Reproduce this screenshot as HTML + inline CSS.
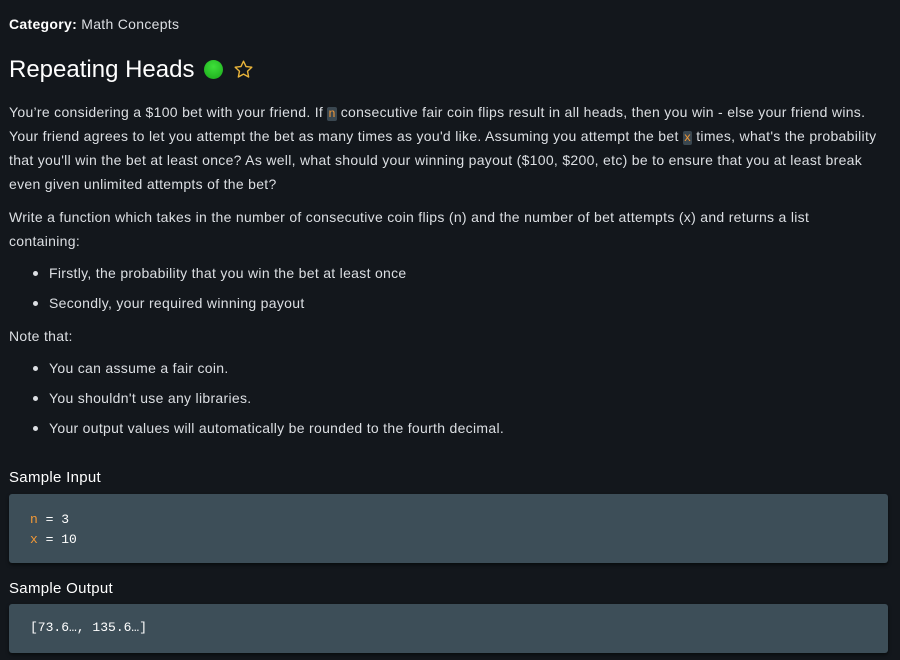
<!DOCTYPE html>
<html><head><style>
body{margin:0;width:900px;height:660px;background:#13171c;color:#dcdfe3;font-family:"Liberation Sans",sans-serif;font-size:14px;letter-spacing:.3px;overflow:hidden;position:relative}
.a{position:absolute;left:9px;white-space:nowrap}
.c{background:#3a4750;color:#f59a36;padding:0 1px;border-radius:2px;font-family:"Liberation Mono",monospace;font-size:12px;letter-spacing:0}
.li{position:absolute;left:49px;white-space:nowrap}
.dot{position:absolute;left:33px;width:5px;height:5px;border-radius:50%;background:#dcdfe3}
.box{position:absolute;left:9px;width:879px;background:#3d4e58;border-radius:3px;box-shadow:0 2px 3px rgba(0,0,0,.5);font-family:"Liberation Mono",monospace;font-size:13px;letter-spacing:0;color:#fff}
.h{position:absolute;left:9px;font-size:15px;color:#fff}
</style></head><body>
<div class="a" style="top:16px"><b style="color:#fff">Category:</b> Math Concepts</div>
<div class="a" style="top:56px;font-size:24px;color:#fff;letter-spacing:0">Repeating Heads</div>
<div style="position:absolute;left:204px;top:60px;width:19px;height:19px;border-radius:50%;background:radial-gradient(circle at 50% 35%,#3ee03a,#1aa81a)"></div>
<svg style="position:absolute;left:233px;top:59px" width="21" height="21" viewBox="0 0 24 24"><path d="M12 2.5l2.9 6.1 6.6.8-4.9 4.6 1.3 6.6L12 17.3l-5.9 3.3 1.3-6.6-4.9-4.6 6.6-.8z" fill="none" stroke="#e9b43a" stroke-width="1.6" stroke-linejoin="round"/></svg>
<div class="a" style="top:104px">You’re considering a $100 bet with your friend. If <span class="c">n</span> consecutive fair coin flips result in all heads, then you win - else your friend wins.</div>
<div class="a" style="top:128px">Your friend agrees to let you attempt the bet as many times as you'd like. Assuming you attempt the bet <span class="c">x</span> times, what's the probability</div>
<div class="a" style="top:152px">that you'll win the bet at least once? As well, what should your winning payout ($100, $200, etc) be to ensure that you at least break</div>
<div class="a" style="top:176px">even given unlimited attempts of the bet?</div>
<div class="a" style="top:209px">Write a function which takes in the number of consecutive coin flips (n) and the number of bet attempts (x) and returns a list</div>
<div class="a" style="top:233px">containing:</div>
<div class="dot" style="top:271px"></div><div class="li" style="top:265px">Firstly, the probability that you win the bet at least once</div>
<div class="dot" style="top:301px"></div><div class="li" style="top:295px">Secondly, your required winning payout</div>
<div class="a" style="top:328px">Note that:</div>
<div class="dot" style="top:366px"></div><div class="li" style="top:360px">You can assume a fair coin.</div>
<div class="dot" style="top:396px"></div><div class="li" style="top:390px">You shouldn't use any libraries.</div>
<div class="dot" style="top:426px"></div><div class="li" style="top:420px">Your output values will automatically be rounded to the fourth decimal.</div>
<div class="h" style="top:469px">Sample Input</div>
<div class="box" style="top:494px;height:69px"><div style="position:absolute;left:21px;top:16px;line-height:20px"><span style="color:#f59a36">n</span> = 3<br><span style="color:#f59a36">x</span> = 10</div></div>
<div class="h" style="top:580px">Sample Output</div>
<div class="box" style="top:604px;height:49px"><div style="position:absolute;left:21px;top:16px">[73.6…, 135.6…]</div></div>
</body></html>
